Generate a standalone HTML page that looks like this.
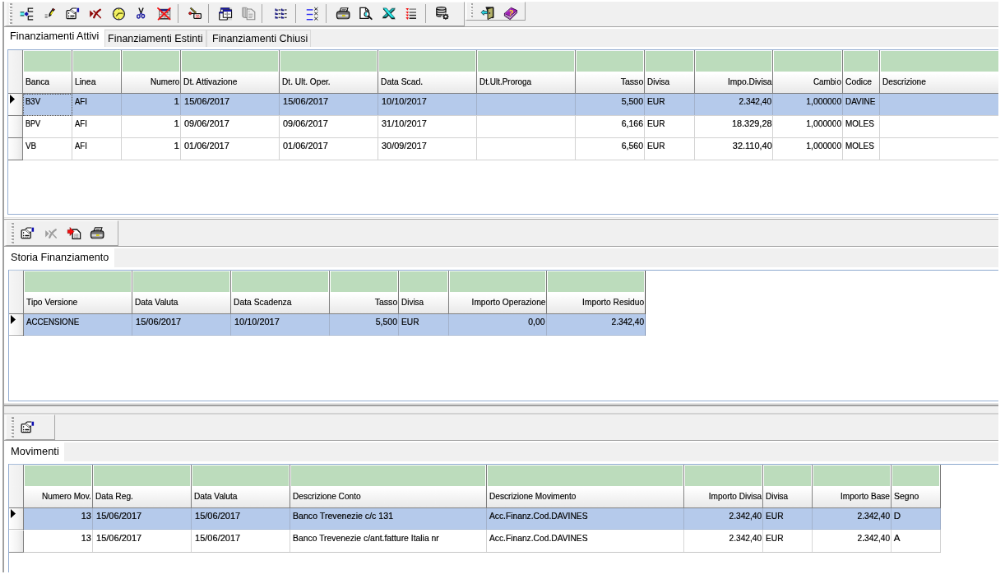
<!DOCTYPE html><html><head><meta charset="utf-8"><title>Finanziamenti</title><style>
html,body{margin:0;padding:0;background:#fff;overflow:hidden;}
html{width:1000px;height:575px;}
body{width:1000px;height:575px;overflow:hidden;position:relative;}
#root{position:absolute;left:0;top:0;width:1215px;height:699px;overflow:hidden;transform:scale(0.8224);transform-origin:0 0;
 font-family:"Liberation Sans",sans-serif;font-size:11.6px;color:#000;-webkit-text-stroke:0.2px #000;will-change:transform;}
#root div{position:absolute;box-sizing:border-box;}
.bg{background:#f0f0f0;}
.ln{background:#a0a0a0;}
.tab{font-size:13.33px;white-space:nowrap;line-height:16px;-webkit-text-stroke:0;}
.tabi{background:#f0f0f0;border:1px solid #dadada;border-bottom:none;}
.grid{background:#fff;border:1px solid #90abd0;border-right:none;overflow:hidden;}
.hd{background:linear-gradient(#ffffff 0%,#ffffff 55%,#e9e9e9 100%);}
.gr{background:#bcdcbc;}
.vs{background:#7f7f7f;width:1px;}
.hs{background:#7f7f7f;height:1px;}
.c{white-space:nowrap;overflow:hidden;line-height:13px;padding:2px 1px 0 3.6px;}
.h{white-space:nowrap;overflow:hidden;line-height:13px;padding:4.8px 1px 0 3.2px;}
.r{text-align:right;}
.sel{background:#b5caeb;}
.gl{background:#d4d4d4;}
.gls{background:#a3b2cc;}
.rh{background:linear-gradient(90deg,#ffffff 0%,#f4f4f4 60%,#e6e6e6 100%);border-right:1px solid #7f7f7f;border-bottom:1px solid #7f7f7f;}
.tb{background:#f0f0f0;border-right:1px solid #a8a8a8;border-bottom:1px solid #a0a0a0;border-left:3.4px solid #fafafa;border-top:1px solid #fbfbfb;}
.grip{width:2px;background:repeating-linear-gradient(#a6a6a6 0,#a6a6a6 1.7px,transparent 1.7px,transparent 3.83px);}
.gripw{width:2.2px;background:repeating-linear-gradient(#ffffff 0,#ffffff 1.7px,transparent 1.7px,transparent 3.83px);}
.sep{width:1px;background:#a6a6a6;}
.ic{width:16px;height:16px;}
.ic svg{position:absolute;left:0;top:0;width:16px;height:16px;overflow:visible;}
</style></head><body><div id="root">
<div class="" style="left:2.8px;top:2px;width:1.8px;height:694px;background:#a0a0a0"></div>
<div class="bg" style="left:5px;top:2px;width:1208.6px;height:30px;"></div>
<div class="ln" style="left:5px;top:31.5px;width:1208.6px;height:1px;"></div>
<div class="tb" style="left:5px;top:2px;width:559.6px;height:29.5px;"></div>
<div class="gripw" style="left:11.4px;top:5px;width:2.2px;height:24.8px;"></div>
<div class="grip" style="left:12.4px;top:4px;width:2.2px;height:24.8px;"></div>
<div class="ic" style="left:24px;top:9px"><svg viewBox="0 0 16 16"><rect x="0.6" y="5.6" width="4.8" height="4.6" fill="#5cf2f2"/><path d="M0.6 5.8H5.4M0.6 10H5.4" stroke="#102828" stroke-width="1.1"/><path d="M5.4 8L8.3 5.2L10.8 8L8.3 10.8Z" fill="#1414a8"/><path d="M16.2 1H10.3V5.2H16.2M16.2 10.7H10.3V14.9H16.2" fill="none" stroke="#151515" stroke-width="1.25"/></svg></div>
<div class="ic" style="left:52px;top:9px"><svg viewBox="0 0 16 16"><path d="M7.2 11.8L7.5 8L12.1 0.7L14.9 2.4L10.3 9.7Z" fill="#181818"/><path d="M9 8.2L11.6 4L13 4.9L10.4 9Z" fill="#f2ec10"/><path d="M11.9 2.2L13.9 3.5L14.5 2.5L12.5 1.3Z" fill="#8a1414"/><path d="M14 4.2L11 9.4" stroke="#fff" stroke-width="0.9"/><path d="M2.6 8.8H5.8M2.6 10.6H5.8M2.6 12.4H5.8" stroke="#8c8c8c" stroke-width="1.1"/></svg></div>
<div class="ic" style="left:80px;top:9px"><svg viewBox="0 0 16 16"><rect x="1.1" y="3.7" width="11" height="10" rx="1" fill="#fff" stroke="#141414" stroke-width="1.3"/><path d="M3 7H4.2M3 10.6H4.2M5.4 10.6H10.4" stroke="#000" stroke-width="1.5"/><path d="M3 12.5H10.4" stroke="#8a8a8a" stroke-width="0.9" stroke-dasharray="1 0.7"/><path d="M4.6 3.4L8 0.9L13.4 1.2V5L11.2 7.4L9.6 8L5.2 3.9Z" fill="#fff"/><path d="M5.2 3.6L10 7.6M6.6 2.6L11.4 6.6" stroke="#555" stroke-width="0.9"/><path d="M5 3.4L8 1H13.2" fill="none" stroke="#141414" stroke-width="1.1"/><path d="M12.6 5.6L10.4 7.6" stroke="#141414" stroke-width="1.1"/><rect x="13.5" y="0.7" width="2.6" height="5" fill="#1010b0"/></svg></div>
<div class="ic" style="left:108px;top:9px"><svg viewBox="0 0 16 16"><g transform="translate(0 0)"><path d="M1.2 3.4L5.6 7.6L1.2 11.9Z" fill="#8e0808"/><path d="M6 4.2L14.2 12.6" fill="none" stroke="#8e0808" stroke-width="1.5" stroke-linecap="round"/><path d="M13.8 2.8C10.6 4.6 8 8 6.2 12.2" fill="none" stroke="#8e0808" stroke-width="2.3" stroke-linecap="round"/></g></svg></div>
<div class="ic" style="left:136px;top:9px"><svg viewBox="0 0 16 16"><circle cx="8.4" cy="7.9" r="7" fill="#f4f262" stroke="#2a2a40" stroke-width="1.3"/><path d="M8.4 1.6V3M8.4 12.8V14.2M2.2 7.9H3.4M13.4 7.9H14.6" stroke="#55551a" stroke-width="0.9"/><path d="M5.2 10.6L8.2 7.2H13" fill="none" stroke="#4a4a08" stroke-width="1.3"/></svg></div>
<div class="ic" style="left:164px;top:9px"><svg viewBox="0 0 16 16"><path d="M4.9 0.6L7.7 7.4M10.1 0.6L7.3 7.4" stroke="#101010" stroke-width="1.4" fill="none"/><path d="M7.5 7L5.6 9M7.5 7L9 8.8" stroke="#1c1ca0" stroke-width="1.2"/><ellipse cx="4.4" cy="11" rx="1.7" ry="2.1" fill="none" stroke="#1c1ca0" stroke-width="1.4"/><ellipse cx="9.9" cy="10.6" rx="1.7" ry="2.1" fill="none" stroke="#1c1ca0" stroke-width="1.4"/></svg></div>
<div class="ic" style="left:192px;top:9px"><svg viewBox="0 0 16 16"><rect x="1.6" y="2.2" width="13.2" height="11.6" fill="#e4e4e4" stroke="#707070" stroke-width="1"/><rect x="2" y="2.2" width="12.6" height="2.2" fill="#10107a"/><path d="M2 8.6H14.6M2 11.4H14.6M8.3 4.4V13.8" stroke="#909090" stroke-width="0.9"/><rect x="4" y="5.6" width="2.4" height="1.8" fill="#555"/><rect x="10.4" y="5.6" width="2.4" height="1.8" fill="#555"/><path d="M2 13.8H14.8" stroke="#202020" stroke-width="1.2"/><path d="M0 0.9L14.6 14.4M14.8 1L0.6 14.6" stroke="#f21414" stroke-width="1.9" stroke-linecap="round"/></svg></div>
<div class="ic" style="left:228.5px;top:9px"><svg viewBox="0 0 16 16"><path d="M3.2 0.2L10.2 6.4L9 7.6L2.4 1.4Z" fill="#a8a018" stroke="#202020" stroke-width="0.9"/><path d="M8.4 8L12.2 6.8L10.4 5.2Z" fill="#fff"/><path d="M3 7.4H8" stroke="#000" stroke-width="1.2"/><circle cx="2.2" cy="7.2" r="1.6" fill="#e81414" stroke="#300" stroke-width="0.6"/><rect x="6.8" y="7.6" width="8.6" height="5.8" rx="0.8" fill="#fff" stroke="#101010" stroke-width="1.3"/><path d="M8.6 10.6L10 9.2L11 10.8L12.2 9.2L13.6 11M9 12H13.4" fill="none" stroke="#e02828" stroke-width="0.9"/></svg></div>
<div class="ic" style="left:266px;top:9px"><svg viewBox="0 0 16 16"><rect x="1.2" y="0.4" width="14.8" height="15.2" fill="#c4c4c4" opacity="0.55"/><rect x="2.5" y="0.7" width="10.4" height="6" fill="#fff" stroke="#101010" stroke-width="0.8"/><rect x="2.5" y="0.7" width="10.4" height="2" fill="#1818a8"/><rect x="5.3" y="3" width="10.2" height="9.2" fill="#fff" stroke="#101010" stroke-width="1.1"/><rect x="5.3" y="2.8" width="10.2" height="2.2" fill="#1818a8"/><path d="M7 8H9.4M11.2 8H13.6M10.3 5.4V11.6" stroke="#808080" stroke-width="1.3"/><rect x="0.6" y="5.8" width="9.8" height="9.2" rx="0.8" fill="#fff" stroke="#101010" stroke-width="1.2"/><rect x="0.6" y="5.4" width="5.2" height="2" fill="#1818a8"/><rect x="5.3" y="5.2" width="10.2" height="7" fill="#fff"/><path d="M5.3 5V12.2H15.5V5" fill="none" stroke="#101010" stroke-width="1.1"/><path d="M7 8.2H9.4M11.2 8.2H13.6M10.3 5.6V11.6" stroke="#808080" stroke-width="1.3"/><path d="M2.4 8.6V13" stroke="#9a9a9a" stroke-width="1" stroke-dasharray="1.4 1"/></svg></div>
<div class="ic" style="left:294px;top:9px"><svg viewBox="0 0 16 16"><path d="M0.8 0.3H5.4L6.8 1.2V12.6L2.2 12.2L0.8 11.2Z" fill="#dcdcdc" stroke="#8c8c8c" stroke-width="1"/><path d="M2.6 0.6V12M4.4 0.8V12.2" stroke="#9a9a9a" stroke-width="0.8"/><path d="M6.2 2H11.6L15.8 5.6V14.8H6.2Z" fill="#ececec" stroke="#8a8a8a" stroke-width="1.1"/><path d="M8.2 5H9.6M8.2 8.2H13.4M8.2 10.4H13.4M8.2 12.4H12.4" stroke="#a0a0a0" stroke-width="1"/></svg></div>
<div class="ic" style="left:334px;top:9px"><svg viewBox="0 0 16 16"><path d="M0.5 4.3V1.5H1.9V2.5H3.8V4.3Z" fill="#10107c"/><path d="M4.6 3H7.2" stroke="#3a3a3a" stroke-width="1.3"/><path d="M7.9 4.3V1.5H9.3V2.5H11.2V4.3Z" fill="#10107c"/><path d="M12 3H14.6" stroke="#3a3a3a" stroke-width="1.3"/><path d="M0.5 8.95V6.15H1.9V7.15H3.8V8.95Z" fill="#10107c"/><path d="M4.6 7.65H7.2" stroke="#3a3a3a" stroke-width="1.3"/><path d="M7.9 8.95V6.15H9.3V7.15H11.2V8.95Z" fill="#10107c"/><path d="M12 7.65H14.6" stroke="#3a3a3a" stroke-width="1.3"/><path d="M0.5 13.6V10.8H1.9V11.8H3.8V13.6Z" fill="#10107c"/><path d="M4.6 12.3H7.2" stroke="#3a3a3a" stroke-width="1.3"/><path d="M7.9 13.6V10.8H9.3V11.8H11.2V13.6Z" fill="#10107c"/><path d="M12 12.3H14.6" stroke="#3a3a3a" stroke-width="1.3"/></svg></div>
<div class="ic" style="left:371px;top:9px"><svg viewBox="0 0 16 16"><path d="M1.8 2.9H9.4" stroke="#2a2af4" stroke-width="1.4"/><path d="M11.2 0L15.4 3.6M15.4 0L11.2 3.6" stroke="#262626" stroke-width="1"/><path d="M1.8 8.5H9.4" stroke="#2a2af4" stroke-width="1.4"/><path d="M11.2 5.6L15.4 9.2M15.4 5.6L11.2 9.2" stroke="#262626" stroke-width="1"/><path d="M1.8 14.7H9.4" stroke="#2a2af4" stroke-width="1.4"/><path d="M11.2 11.8L15.4 15.4M15.4 11.8L11.2 15.4" stroke="#262626" stroke-width="1"/></svg></div>
<div class="ic" style="left:409px;top:9px"><svg viewBox="0 0 16 16"><path d="M4 5L5.6 0.8H14L12.2 5Z" fill="#fff" stroke="#101010" stroke-width="1.1"/><path d="M6.6 2.4H11.8M6.2 3.8H11" stroke="#505050" stroke-width="0.9"/><path d="M0.4 8.4C0.4 6.2 1.8 4.8 3.8 4.8H13C15 4.8 16 6 16 7.6V10.8C16 12.6 14.6 13.8 13 13.8H3.4C1.4 13.8 0.4 12.6 0.4 11Z" fill="#707070" stroke="#101010" stroke-width="1.1"/><path d="M4 5.4L5 3.2M12.4 5.4L13.4 3.2" stroke="#101010" stroke-width="1"/><rect x="1.6" y="8.6" width="13" height="3" fill="#d4d4d4"/><rect x="7" y="9" width="3.6" height="2" fill="#d8cc10"/><path d="M2 12.8H14.4" stroke="#8a8a8a" stroke-width="0.9"/></svg></div>
<div class="ic" style="left:437px;top:9px"><svg viewBox="0 0 16 16"><path d="M0.9 0.3H7.6L11 3.6V13.4H0.9Z" fill="#fff" stroke="#101010" stroke-width="1.3"/><path d="M7.4 0.5V3.8H10.8" fill="none" stroke="#101010" stroke-width="1"/><circle cx="9" cy="8.2" r="3" fill="#fff" stroke="#101010" stroke-width="1.2"/><path d="M9 5.6A2.7 2.7 0 0 0 9 10.9Z" fill="#38e4f0"/><path d="M11.2 10.6L14.8 14.2" stroke="#101010" stroke-width="1.9" stroke-linecap="round"/></svg></div>
<div class="ic" style="left:465px;top:9px"><svg viewBox="0 0 16 16"><path d="M-0.4 13.2H4.2L15.6 2.4H11.6Z" fill="#101010"/><path d="M11.6 1.2H15.4L4.4 11.8H0.4Z" fill="#22b4b4" stroke="#0a3c3c" stroke-width="0.7"/><path d="M0.8 2H4.8L15.8 14.2H11.2Z" fill="#101010"/><path d="M0.8 0.9H4.8L15 12.8H11Z" fill="#28ecec" stroke="#0a4a4a" stroke-width="0.7"/></svg></div>
<div class="ic" style="left:493px;top:9px"><svg viewBox="0 0 16 16"><path d="M4.6 2.1H13" stroke="#8a8a8a" stroke-width="1.5"/><path d="M0.4 1H4L2.4 3.8Z" fill="#f41818"/><path d="M4.6 6H13" stroke="#5a5a5a" stroke-width="1.5"/><path d="M0.4 4.9H4L2.4 7.7Z" fill="#f41818"/><path d="M4.6 9.6H13" stroke="#303030" stroke-width="1.5"/><path d="M0.4 8.5H4L2.4 11.3Z" fill="#f41818"/><path d="M4.6 13.2H13" stroke="#1a1a1a" stroke-width="1.5"/><path d="M0.4 12.1H4L2.4 14.9Z" fill="#f41818"/></svg></div>
<div class="ic" style="left:529.5px;top:9px"><svg viewBox="0 0 16 16"><path d="M0.8 1.4V9.4C0.8 10.6 3.2 11.2 6.4 11.2C9.6 11.2 12 10.6 12 9.4V1.4Z" fill="#e6e6e6"/><ellipse cx="6.4" cy="1.4" rx="5.6" ry="1.7" fill="#cfcfcf" stroke="#141414" stroke-width="1.2"/><path d="M0.8 1.4V9.2C0.8 10.6 3.4 11.2 6.4 11.2M12 1.4V6.6M0.8 4.2C0.8 5.6 3.4 6.2 6.4 6.2C9.6 6.2 12 5.6 12 4.2M0.8 7C0.8 8.4 3.4 9 6.4 9C7.2 9 8 8.95 8.6 8.9" fill="none" stroke="#141414" stroke-width="1.3"/><circle cx="11.9" cy="11.2" r="2.3" fill="#fff" stroke="#1c1c1c" stroke-width="1.4"/><path d="M11.9 7.4V15M8.1 11.2H15.7M9.2 8.5L14.6 13.9M14.6 8.5L9.2 13.9" stroke="#1c1c1c" stroke-width="1.1"/><circle cx="11.9" cy="11.2" r="1.3" fill="#fff"/></svg></div>
<div class="sep" style="left:215.5px;top:5px;width:1px;height:23px;"></div>
<div class="sep" style="left:253px;top:5px;width:1px;height:23px;"></div>
<div class="sep" style="left:318px;top:5px;width:1px;height:23px;"></div>
<div class="sep" style="left:358.8px;top:5px;width:1px;height:23px;"></div>
<div class="sep" style="left:395.9px;top:5px;width:1px;height:23px;"></div>
<div class="sep" style="left:516.9px;top:5px;width:1px;height:23px;"></div>
<div class="tb" style="left:564.8px;top:2px;width:74.7px;height:23.4px;"></div>
<div class="gripw" style="left:571.8px;top:5.4px;width:2.2px;height:17.2px;"></div>
<div class="grip" style="left:572.8px;top:4.4px;width:2.2px;height:17.2px;"></div>
<div class="ic" style="left:585px;top:8px"><svg viewBox="0 0 16 16"><path d="M5.6 0.9H15V13.6H10.4" fill="#181818" stroke="#101010" stroke-width="1"/><path d="M8 2.6L14.4 1.2V12.6L8 15.6Z" fill="#a6a45c" stroke="#101010" stroke-width="0.9"/><path d="M9 3.6L13.4 2.6V12L9 14Z" fill="#b4b26a"/><rect x="9.6" y="7" width="1.5" height="1.9" fill="#2a2a50"/><path d="M0 7.2L3.2 4V5.8H7.6V8.6H3.2V10.4Z" fill="#28dce8" stroke="#103038" stroke-width="0.8"/></svg></div>
<div class="ic" style="left:613px;top:8px"><svg viewBox="0 0 16 16"><path d="M0.4 8.4V11.4L7.4 15.8L15.6 7.6V4.6Z" fill="#fff" stroke="#2c0838" stroke-width="0.9"/><path d="M0.8 10.4L7.4 14.6L15.2 6.6" fill="none" stroke="#7a1c90" stroke-width="1.1"/><path d="M0.3 8.4L8.4 1.3L15.7 4.6L7.2 12.2Z" fill="#a020b8" stroke="#3a0848" stroke-width="0.9"/><path d="M1.4 8.2L8.4 2.2" stroke="#e8a0f4" stroke-width="1" stroke-dasharray="1 0.8"/><text x="5.6" y="10.6" font-family="Liberation Sans, sans-serif" font-weight="bold" font-size="9.6" fill="#fae61e" transform="rotate(14 8 7)">?</text></svg></div>
<div class="" style="left:5px;top:32.5px;width:1208.6px;height:2px;background:#fff"></div>
<div class="bg" style="left:5px;top:34.5px;width:1208.6px;height:22.5px;"></div>
<div class="tab" style="left:5px;top:32.5px;width:121.5px;height:26px;background:#fff;padding:3.6px 0 0 7px"><span style="display:inline-block;transform:scaleX(0.9433);transform-origin:0 0">Finanziamenti Attivi</span></div>
<div class="tab tabi" style="left:126.5px;top:35.5px;width:124.5px;height:21.5px;padding:2.2px 0 0 3.6px"><span style="display:inline-block;transform:scaleX(0.9388);transform-origin:0 0">Finanziamenti Estinti</span></div>
<div class="tab tabi" style="left:251px;top:35.5px;width:126.5px;height:21.5px;padding:2.2px 0 0 6.2px"><span style="display:inline-block;transform:scaleX(0.9391);transform-origin:0 0">Finanziamenti Chiusi</span></div>
<div class="grid" style="left:9px;top:60px;width:1204.6px;height:201px">
<div class="hd" style="left:0px;top:0px;width:1204.6px;height:52px;"></div>
<div class="" style="left:0px;top:0px;width:17px;height:52px;background:linear-gradient(90deg,#f6f6f6,#eeeeee)"></div>
<div class="vs" style="left:17px;top:0px;width:1px;height:53px;"></div>
<div class="gr" style="left:19px;top:1px;width:57px;height:25px;"></div>
<div class="h" style="left:18px;top:26px;width:59px;height:26px;"><span style="display:inline-block;transform:scaleX(0.8840);transform-origin:0 0">Banca</span></div>
<div class="vs" style="left:77px;top:0px;width:1px;height:53px;"></div>
<div class="gr" style="left:79px;top:1px;width:57px;height:25px;"></div>
<div class="h" style="left:78px;top:26px;width:59px;height:26px;"><span style="display:inline-block;transform:scaleX(0.8956);transform-origin:0 0">Linea</span></div>
<div class="vs" style="left:137px;top:0px;width:1px;height:53px;"></div>
<div class="gr" style="left:139px;top:1px;width:69px;height:25px;"></div>
<div class="h r" style="left:138px;top:26px;width:71px;height:26px;"><span style="display:inline-block;transform:scaleX(0.8526);transform-origin:100% 0">Numero</span></div>
<div class="vs" style="left:209px;top:0px;width:1px;height:53px;"></div>
<div class="gr" style="left:211px;top:1px;width:117px;height:25px;"></div>
<div class="h" style="left:210px;top:26px;width:119px;height:26px;"><span style="display:inline-block;transform:scaleX(0.8821);transform-origin:0 0">Dt. Attivazione</span></div>
<div class="vs" style="left:329px;top:0px;width:1px;height:53px;"></div>
<div class="gr" style="left:331px;top:1px;width:117px;height:25px;"></div>
<div class="h" style="left:330px;top:26px;width:119px;height:26px;"><span style="display:inline-block;transform:scaleX(0.8758);transform-origin:0 0">Dt. Ult. Oper.</span></div>
<div class="vs" style="left:449px;top:0px;width:1px;height:53px;"></div>
<div class="gr" style="left:451px;top:1px;width:117px;height:25px;"></div>
<div class="h" style="left:450px;top:26px;width:119px;height:26px;"><span style="display:inline-block;transform:scaleX(0.8896);transform-origin:0 0">Data Scad.</span></div>
<div class="vs" style="left:569px;top:0px;width:1px;height:53px;"></div>
<div class="gr" style="left:571px;top:1px;width:117px;height:25px;"></div>
<div class="h" style="left:570px;top:26px;width:119px;height:26px;"><span style="display:inline-block;transform:scaleX(0.8593);transform-origin:0 0">Dt.Ult.Proroga</span></div>
<div class="vs" style="left:689px;top:0px;width:1px;height:53px;"></div>
<div class="gr" style="left:691px;top:1px;width:81px;height:25px;"></div>
<div class="h r" style="left:690px;top:26px;width:83px;height:26px;"><span style="display:inline-block;transform:scaleX(0.9128);transform-origin:100% 0">Tasso</span></div>
<div class="vs" style="left:773px;top:0px;width:1px;height:53px;"></div>
<div class="gr" style="left:775px;top:1px;width:57.7px;height:25px;"></div>
<div class="h" style="left:774px;top:26px;width:59.7px;height:26px;"><span style="display:inline-block;transform:scaleX(0.8594);transform-origin:0 0">Divisa</span></div>
<div class="vs" style="left:833.7px;top:0px;width:1px;height:53px;"></div>
<div class="gr" style="left:835.7px;top:1px;width:92.7px;height:25px;"></div>
<div class="h r" style="left:834.7px;top:26px;width:94.7px;height:26px;"><span style="display:inline-block;transform:scaleX(0.8860);transform-origin:100% 0">Impo.Divisa</span></div>
<div class="vs" style="left:929.4px;top:0px;width:1px;height:53px;"></div>
<div class="gr" style="left:931.4px;top:1px;width:81.6px;height:25px;"></div>
<div class="h r" style="left:930.4px;top:26px;width:83.6px;height:26px;"><span style="display:inline-block;transform:scaleX(0.8496);transform-origin:100% 0">Cambio</span></div>
<div class="vs" style="left:1014px;top:0px;width:1px;height:53px;"></div>
<div class="gr" style="left:1016px;top:1px;width:42px;height:25px;"></div>
<div class="h" style="left:1015px;top:26px;width:44px;height:26px;"><span style="display:inline-block;transform:scaleX(0.8870);transform-origin:0 0">Codice</span></div>
<div class="vs" style="left:1059px;top:0px;width:1px;height:53px;"></div>
<div class="gr" style="left:1061px;top:1px;width:142.6px;height:25px;"></div>
<div class="h" style="left:1060px;top:26px;width:144.6px;height:26px;"><span style="display:inline-block;transform:scaleX(0.8717);transform-origin:0 0">Descrizione</span></div>
<div class="hs" style="left:0px;top:52px;width:1204.6px;height:1px;"></div>
<div class="sel" style="left:18px;top:53px;width:1186.6px;height:26px;"></div>
<div class="rh" style="left:0px;top:53px;width:18px;height:27px;"><svg width="8" height="12" style="position:absolute;left:2.3px;top:1px"><path d="M0 0L6 5.5L0 11Z" fill="#000"/></svg></div>
<div class="c" style="left:18px;top:53px;width:59px;height:26px;padding-left:2.8px"><span style="display:inline-block;transform:scaleX(0.8223);transform-origin:0 0">B3V</span></div>
<div class="gls" style="left:77px;top:53px;width:1px;height:26px;"></div>
<div class="c" style="left:78px;top:53px;width:59px;height:26px;padding-left:2.8px"><span style="display:inline-block;transform:scaleX(0.8191);transform-origin:0 0">AFI</span></div>
<div class="gls" style="left:137px;top:53px;width:1px;height:26px;"></div>
<div class="c r" style="left:138px;top:53px;width:71px;height:26px;">1</div>
<div class="gls" style="left:209px;top:53px;width:1px;height:26px;"></div>
<div class="c" style="left:210px;top:53px;width:119px;height:26px;"><span style="display:inline-block;transform:scaleX(0.9524);transform-origin:0 0">15/06/2017</span></div>
<div class="gls" style="left:329px;top:53px;width:1px;height:26px;"></div>
<div class="c" style="left:330px;top:53px;width:119px;height:26px;"><span style="display:inline-block;transform:scaleX(0.9524);transform-origin:0 0">15/06/2017</span></div>
<div class="gls" style="left:449px;top:53px;width:1px;height:26px;"></div>
<div class="c" style="left:450px;top:53px;width:119px;height:26px;"><span style="display:inline-block;transform:scaleX(0.9435);transform-origin:0 0">10/10/2017</span></div>
<div class="gls" style="left:569px;top:53px;width:1px;height:26px;"></div>
<div class="gls" style="left:689px;top:53px;width:1px;height:26px;"></div>
<div class="c r" style="left:690px;top:53px;width:83px;height:26px;"><span style="display:inline-block;transform:scaleX(0.9067);transform-origin:100% 0">5,500</span></div>
<div class="gls" style="left:773px;top:53px;width:1px;height:26px;"></div>
<div class="c" style="left:774px;top:53px;width:59.7px;height:26px;padding-left:2.8px"><span style="display:inline-block;transform:scaleX(0.8827);transform-origin:0 0">EUR</span></div>
<div class="gls" style="left:833.7px;top:53px;width:1px;height:26px;"></div>
<div class="c r" style="left:834.7px;top:53px;width:94.7px;height:26px;"><span style="display:inline-block;transform:scaleX(0.8763);transform-origin:100% 0">2.342,40</span></div>
<div class="gls" style="left:929.4px;top:53px;width:1px;height:26px;"></div>
<div class="c r" style="left:930.4px;top:53px;width:83.6px;height:26px;"><span style="display:inline-block;transform:scaleX(0.8909);transform-origin:100% 0">1,000000</span></div>
<div class="gls" style="left:1014px;top:53px;width:1px;height:26px;"></div>
<div class="c" style="left:1015px;top:53px;width:44px;height:26px;padding-left:2.8px"><span style="display:inline-block;transform:scaleX(0.8597);transform-origin:0 0">DAVINE</span></div>
<div class="gls" style="left:1059px;top:53px;width:1px;height:26px;"></div>
<div class="gl" style="left:18px;top:79px;width:1186.6px;height:1px;"></div>
<div class="rh" style="left:0px;top:80px;width:18px;height:27px;"></div>
<div class="c" style="left:18px;top:80px;width:59px;height:26px;padding-left:2.8px"><span style="display:inline-block;transform:scaleX(0.7773);transform-origin:0 0">BPV</span></div>
<div class="gl" style="left:77px;top:80px;width:1px;height:26px;"></div>
<div class="c" style="left:78px;top:80px;width:59px;height:26px;padding-left:2.8px"><span style="display:inline-block;transform:scaleX(0.8191);transform-origin:0 0">AFI</span></div>
<div class="gl" style="left:137px;top:80px;width:1px;height:26px;"></div>
<div class="c r" style="left:138px;top:80px;width:71px;height:26px;">1</div>
<div class="gl" style="left:209px;top:80px;width:1px;height:26px;"></div>
<div class="c" style="left:210px;top:80px;width:119px;height:26px;"><span style="display:inline-block;transform:scaleX(0.9435);transform-origin:0 0">09/06/2017</span></div>
<div class="gl" style="left:329px;top:80px;width:1px;height:26px;"></div>
<div class="c" style="left:330px;top:80px;width:119px;height:26px;"><span style="display:inline-block;transform:scaleX(0.9435);transform-origin:0 0">09/06/2017</span></div>
<div class="gl" style="left:449px;top:80px;width:1px;height:26px;"></div>
<div class="c" style="left:450px;top:80px;width:119px;height:26px;"><span style="display:inline-block;transform:scaleX(0.9435);transform-origin:0 0">31/10/2017</span></div>
<div class="gl" style="left:569px;top:80px;width:1px;height:26px;"></div>
<div class="gl" style="left:689px;top:80px;width:1px;height:26px;"></div>
<div class="c r" style="left:690px;top:80px;width:83px;height:26px;"><span style="display:inline-block;transform:scaleX(0.9067);transform-origin:100% 0">6,166</span></div>
<div class="gl" style="left:773px;top:80px;width:1px;height:26px;"></div>
<div class="c" style="left:774px;top:80px;width:59.7px;height:26px;padding-left:2.8px"><span style="display:inline-block;transform:scaleX(0.8827);transform-origin:0 0">EUR</span></div>
<div class="gl" style="left:833.7px;top:80px;width:1px;height:26px;"></div>
<div class="c r" style="left:834.7px;top:80px;width:94.7px;height:26px;"><span style="display:inline-block;transform:scaleX(0.9435);transform-origin:100% 0">18.329,28</span></div>
<div class="gl" style="left:929.4px;top:80px;width:1px;height:26px;"></div>
<div class="c r" style="left:930.4px;top:80px;width:83.6px;height:26px;"><span style="display:inline-block;transform:scaleX(0.8909);transform-origin:100% 0">1,000000</span></div>
<div class="gl" style="left:1014px;top:80px;width:1px;height:26px;"></div>
<div class="c" style="left:1015px;top:80px;width:44px;height:26px;padding-left:2.8px"><span style="display:inline-block;transform:scaleX(0.8571);transform-origin:0 0">MOLES</span></div>
<div class="gl" style="left:1059px;top:80px;width:1px;height:26px;"></div>
<div class="gl" style="left:18px;top:106px;width:1186.6px;height:1px;"></div>
<div class="rh" style="left:0px;top:107px;width:18px;height:27px;"></div>
<div class="c" style="left:18px;top:107px;width:59px;height:26px;padding-left:2.8px"><span style="display:inline-block;transform:scaleX(0.8502);transform-origin:0 0">VB</span></div>
<div class="gl" style="left:77px;top:107px;width:1px;height:26px;"></div>
<div class="c" style="left:78px;top:107px;width:59px;height:26px;padding-left:2.8px"><span style="display:inline-block;transform:scaleX(0.8191);transform-origin:0 0">AFI</span></div>
<div class="gl" style="left:137px;top:107px;width:1px;height:26px;"></div>
<div class="c r" style="left:138px;top:107px;width:71px;height:26px;">1</div>
<div class="gl" style="left:209px;top:107px;width:1px;height:26px;"></div>
<div class="c" style="left:210px;top:107px;width:119px;height:26px;"><span style="display:inline-block;transform:scaleX(0.9435);transform-origin:0 0">01/06/2017</span></div>
<div class="gl" style="left:329px;top:107px;width:1px;height:26px;"></div>
<div class="c" style="left:330px;top:107px;width:119px;height:26px;"><span style="display:inline-block;transform:scaleX(0.9435);transform-origin:0 0">01/06/2017</span></div>
<div class="gl" style="left:449px;top:107px;width:1px;height:26px;"></div>
<div class="c" style="left:450px;top:107px;width:119px;height:26px;"><span style="display:inline-block;transform:scaleX(0.9435);transform-origin:0 0">30/09/2017</span></div>
<div class="gl" style="left:569px;top:107px;width:1px;height:26px;"></div>
<div class="gl" style="left:689px;top:107px;width:1px;height:26px;"></div>
<div class="c r" style="left:690px;top:107px;width:83px;height:26px;"><span style="display:inline-block;transform:scaleX(0.9067);transform-origin:100% 0">6,560</span></div>
<div class="gl" style="left:773px;top:107px;width:1px;height:26px;"></div>
<div class="c" style="left:774px;top:107px;width:59.7px;height:26px;padding-left:2.8px"><span style="display:inline-block;transform:scaleX(0.8827);transform-origin:0 0">EUR</span></div>
<div class="gl" style="left:833.7px;top:107px;width:1px;height:26px;"></div>
<div class="c r" style="left:834.7px;top:107px;width:94.7px;height:26px;"><span style="display:inline-block;transform:scaleX(0.9435);transform-origin:100% 0">32.110,40</span></div>
<div class="gl" style="left:929.4px;top:107px;width:1px;height:26px;"></div>
<div class="c r" style="left:930.4px;top:107px;width:83.6px;height:26px;"><span style="display:inline-block;transform:scaleX(0.8909);transform-origin:100% 0">1,000000</span></div>
<div class="gl" style="left:1014px;top:107px;width:1px;height:26px;"></div>
<div class="c" style="left:1015px;top:107px;width:44px;height:26px;padding-left:2.8px"><span style="display:inline-block;transform:scaleX(0.8571);transform-origin:0 0">MOLES</span></div>
<div class="gl" style="left:1059px;top:107px;width:1px;height:26px;"></div>
<div class="gl" style="left:18px;top:133px;width:1186.6px;height:1px;"></div>
</div>
<div class="" style="left:28px;top:114px;width:60px;height:27px;border:1px dotted #555;background:transparent"></div>
<div class="" style="left:5px;top:263.7px;width:1208.6px;height:1.2px;background:#e6e6e6"></div>
<div class="ln" style="left:5px;top:266.2px;width:1208.6px;height:1.2px;"></div>
<div class="bg" style="left:5px;top:267.4px;width:1208.6px;height:32px;"></div>
<div class="ln" style="left:5px;top:299.1px;width:1208.6px;height:1px;"></div>
<div class="tb" style="left:5px;top:267.5px;width:139px;height:31.6px;"></div>
<div class="gripw" style="left:13.4px;top:272px;width:2.2px;height:24.8px;"></div>
<div class="grip" style="left:14.4px;top:271px;width:2.2px;height:24.8px;"></div>
<div class="ic" style="left:25px;top:276.3px"><svg viewBox="0 0 16 16"><rect x="1.1" y="3.7" width="11" height="10" rx="1" fill="#fff" stroke="#141414" stroke-width="1.3"/><path d="M3 7H4.2M3 10.6H4.2M5.4 10.6H10.4" stroke="#000" stroke-width="1.5"/><path d="M3 12.5H10.4" stroke="#8a8a8a" stroke-width="0.9" stroke-dasharray="1 0.7"/><path d="M4.6 3.4L8 0.9L13.4 1.2V5L11.2 7.4L9.6 8L5.2 3.9Z" fill="#fff"/><path d="M5.2 3.6L10 7.6M6.6 2.6L11.4 6.6" stroke="#555" stroke-width="0.9"/><path d="M5 3.4L8 1H13.2" fill="none" stroke="#141414" stroke-width="1.1"/><path d="M12.6 5.6L10.4 7.6" stroke="#141414" stroke-width="1.1"/><rect x="13.5" y="0.7" width="2.6" height="5" fill="#1010b0"/></svg></div>
<div class="ic" style="left:53.5px;top:276.3px"><svg viewBox="0 0 16 16"><g transform="translate(0 0.5)"><path d="M1.2 3.4L5.6 7.6L1.2 11.9Z" fill="#9e9e9e"/><path d="M6 4.2L14.2 12.6" fill="none" stroke="#9e9e9e" stroke-width="1.5" stroke-linecap="round"/><path d="M13.8 2.8C10.6 4.6 8 8 6.2 12.2" fill="none" stroke="#9e9e9e" stroke-width="2.3" stroke-linecap="round"/></g></svg></div>
<div class="ic" style="left:81.5px;top:276.3px"><svg viewBox="0 0 16 16"><path d="M6.2 3H11.6L15.6 7V14.4H6.2Z" fill="#fff" stroke="#101010" stroke-width="1.3"/><path d="M8 9H13.8M8 11H13.8M8 12.8H13.8M10 8V13.4M12 8V13.4" stroke="#808080" stroke-width="0.9" stroke-dasharray="1.3 0.8"/><path d="M0.2 3.4H3V0.5L8 5.5L3 10.5V7.6H0.2Z" fill="#f60c0c" stroke="#700404" stroke-width="0.5"/></svg></div>
<div class="ic" style="left:109.5px;top:276.3px"><svg viewBox="0 0 16 16"><path d="M4 5L5.6 0.8H14L12.2 5Z" fill="#fff" stroke="#101010" stroke-width="1.1"/><path d="M6.6 2.4H11.8M6.2 3.8H11" stroke="#505050" stroke-width="0.9"/><path d="M0.4 8.4C0.4 6.2 1.8 4.8 3.8 4.8H13C15 4.8 16 6 16 7.6V10.8C16 12.6 14.6 13.8 13 13.8H3.4C1.4 13.8 0.4 12.6 0.4 11Z" fill="#707070" stroke="#101010" stroke-width="1.1"/><path d="M4 5.4L5 3.2M12.4 5.4L13.4 3.2" stroke="#101010" stroke-width="1"/><rect x="1.6" y="8.6" width="13" height="3" fill="#d4d4d4"/><rect x="7" y="9" width="3.6" height="2" fill="#d8cc10"/><path d="M2 12.8H14.4" stroke="#8a8a8a" stroke-width="0.9"/></svg></div>
<div class="" style="left:5px;top:300.1px;width:1208.6px;height:2px;background:#fff"></div>
<div class="bg" style="left:5px;top:302.1px;width:1208.6px;height:22.5px;"></div>
<div class="tab" style="left:5px;top:300.1px;width:134px;height:26px;background:#fff;padding:4.5px 0 0 7.5px"><span style="display:inline-block;transform:scaleX(0.9474);transform-origin:0 0">Storia Finanziamento</span></div>
<div class="grid" style="left:10px;top:328px;width:1203.6px;height:159.5px">
<div class="hd" style="left:0px;top:0px;width:774px;height:52px;"></div>
<div class="" style="left:0px;top:0px;width:17px;height:52px;background:linear-gradient(90deg,#f6f6f6,#eeeeee)"></div>
<div class="vs" style="left:17px;top:0px;width:1px;height:53px;"></div>
<div class="gr" style="left:19px;top:1px;width:129px;height:25px;"></div>
<div class="h" style="left:18px;top:26px;width:131px;height:26px;"><span style="display:inline-block;transform:scaleX(0.8840);transform-origin:0 0">Tipo Versione</span></div>
<div class="vs" style="left:149px;top:0px;width:1px;height:53px;"></div>
<div class="gr" style="left:151px;top:1px;width:117px;height:25px;"></div>
<div class="h" style="left:150px;top:26px;width:119px;height:26px;"><span style="display:inline-block;transform:scaleX(0.8796);transform-origin:0 0">Data Valuta</span></div>
<div class="vs" style="left:269px;top:0px;width:1px;height:53px;"></div>
<div class="gr" style="left:271px;top:1px;width:117px;height:25px;"></div>
<div class="h" style="left:270px;top:26px;width:119px;height:26px;"><span style="display:inline-block;transform:scaleX(0.8895);transform-origin:0 0">Data Scadenza</span></div>
<div class="vs" style="left:389px;top:0px;width:1px;height:53px;"></div>
<div class="gr" style="left:391px;top:1px;width:81px;height:25px;"></div>
<div class="h r" style="left:390px;top:26px;width:83px;height:26px;"><span style="display:inline-block;transform:scaleX(0.9128);transform-origin:100% 0">Tasso</span></div>
<div class="vs" style="left:473px;top:0px;width:1px;height:53px;"></div>
<div class="gr" style="left:475px;top:1px;width:58px;height:25px;"></div>
<div class="h" style="left:474px;top:26px;width:60px;height:26px;"><span style="display:inline-block;transform:scaleX(0.8594);transform-origin:0 0">Divisa</span></div>
<div class="vs" style="left:534px;top:0px;width:1px;height:53px;"></div>
<div class="gr" style="left:536px;top:1px;width:116px;height:25px;"></div>
<div class="h r" style="left:535px;top:26px;width:118px;height:26px;"><span style="display:inline-block;transform:scaleX(0.8775);transform-origin:100% 0">Importo Operazione</span></div>
<div class="vs" style="left:653px;top:0px;width:1px;height:53px;"></div>
<div class="gr" style="left:655px;top:1px;width:117px;height:25px;"></div>
<div class="h r" style="left:654px;top:26px;width:119px;height:26px;"><span style="display:inline-block;transform:scaleX(0.8813);transform-origin:100% 0">Importo Residuo</span></div>
<div class="vs" style="left:773px;top:0px;width:1px;height:53px;"></div>
<div class="hs" style="left:0px;top:52px;width:774px;height:1px;"></div>
<div class="sel" style="left:18px;top:53px;width:756px;height:26px;"></div>
<div class="rh" style="left:0px;top:53px;width:18px;height:27px;"><svg width="8" height="12" style="position:absolute;left:2.3px;top:1px"><path d="M0 0L6 5.5L0 11Z" fill="#000"/></svg></div>
<div class="c" style="left:18px;top:53px;width:131px;height:26px;padding-left:2.8px"><span style="display:inline-block;transform:scaleX(0.8362);transform-origin:0 0">ACCENSIONE</span></div>
<div class="gls" style="left:149px;top:53px;width:1px;height:26px;"></div>
<div class="c" style="left:150px;top:53px;width:119px;height:26px;"><span style="display:inline-block;transform:scaleX(0.9524);transform-origin:0 0">15/06/2017</span></div>
<div class="gls" style="left:269px;top:53px;width:1px;height:26px;"></div>
<div class="c" style="left:270px;top:53px;width:119px;height:26px;"><span style="display:inline-block;transform:scaleX(0.9435);transform-origin:0 0">10/10/2017</span></div>
<div class="gls" style="left:389px;top:53px;width:1px;height:26px;"></div>
<div class="c r" style="left:390px;top:53px;width:83px;height:26px;"><span style="display:inline-block;transform:scaleX(0.9067);transform-origin:100% 0">5,500</span></div>
<div class="gls" style="left:473px;top:53px;width:1px;height:26px;"></div>
<div class="c" style="left:474px;top:53px;width:60px;height:26px;padding-left:2.8px"><span style="display:inline-block;transform:scaleX(0.8827);transform-origin:0 0">EUR</span></div>
<div class="gls" style="left:534px;top:53px;width:1px;height:26px;"></div>
<div class="c r" style="left:535px;top:53px;width:118px;height:26px;"><span style="display:inline-block;transform:scaleX(0.8961);transform-origin:100% 0">0,00</span></div>
<div class="gls" style="left:653px;top:53px;width:1px;height:26px;"></div>
<div class="c r" style="left:654px;top:53px;width:119px;height:26px;"><span style="display:inline-block;transform:scaleX(0.8763);transform-origin:100% 0">2.342,40</span></div>
<div class="gls" style="left:773px;top:53px;width:1px;height:26px;"></div>
<div class="gl" style="left:18px;top:79px;width:756px;height:1px;"></div>
</div>
<div class="" style="left:5px;top:490.3px;width:1208.6px;height:2.1px;background:#e4e4e4"></div>
<div class="ln" style="left:5px;top:492.4px;width:1208.6px;height:1.3px;"></div>
<div class="bg" style="left:5px;top:493.7px;width:1208.6px;height:42px;"></div>
<div class="" style="left:5px;top:501.8px;width:1208.6px;height:2.5px;background:#d2d2d2"></div>
<div class="ln" style="left:5px;top:535.3px;width:1208.6px;height:1px;"></div>
<div class="tb" style="left:5px;top:504.3px;width:62px;height:31px;"></div>
<div class="gripw" style="left:13.4px;top:508.4px;width:2.2px;height:24.8px;"></div>
<div class="grip" style="left:14.4px;top:507.4px;width:2.2px;height:24.8px;"></div>
<div class="ic" style="left:25px;top:512.4px"><svg viewBox="0 0 16 16"><rect x="1.1" y="3.7" width="11" height="10" rx="1" fill="#fff" stroke="#141414" stroke-width="1.3"/><path d="M3 7H4.2M3 10.6H4.2M5.4 10.6H10.4" stroke="#000" stroke-width="1.5"/><path d="M3 12.5H10.4" stroke="#8a8a8a" stroke-width="0.9" stroke-dasharray="1 0.7"/><path d="M4.6 3.4L8 0.9L13.4 1.2V5L11.2 7.4L9.6 8L5.2 3.9Z" fill="#fff"/><path d="M5.2 3.6L10 7.6M6.6 2.6L11.4 6.6" stroke="#555" stroke-width="0.9"/><path d="M5 3.4L8 1H13.2" fill="none" stroke="#141414" stroke-width="1.1"/><path d="M12.6 5.6L10.4 7.6" stroke="#141414" stroke-width="1.1"/><rect x="13.5" y="0.7" width="2.6" height="5" fill="#1010b0"/></svg></div>
<div class="" style="left:5px;top:536.3px;width:1208.6px;height:2px;background:#fff"></div>
<div class="bg" style="left:5px;top:538.3px;width:1208.6px;height:22.5px;"></div>
<div class="tab" style="left:5px;top:536.3px;width:73px;height:26px;background:#fff;padding:4.5px 0 0 7.5px"><span style="display:inline-block;transform:scaleX(0.9684);transform-origin:0 0">Movimenti</span></div>
<div class="grid" style="left:10px;top:564px;width:1203.6px;height:157px">
<div class="hd" style="left:0px;top:0px;width:1133px;height:52px;"></div>
<div class="" style="left:0px;top:0px;width:17px;height:52px;background:linear-gradient(90deg,#f6f6f6,#eeeeee)"></div>
<div class="vs" style="left:17px;top:0px;width:1px;height:53px;"></div>
<div class="gr" style="left:19px;top:1px;width:81px;height:25px;"></div>
<div class="h r" style="left:18px;top:26px;width:83px;height:26px;"><span style="display:inline-block;transform:scaleX(0.8681);transform-origin:100% 0">Numero Mov.</span></div>
<div class="vs" style="left:101px;top:0px;width:1px;height:53px;"></div>
<div class="gr" style="left:103px;top:1px;width:117px;height:25px;"></div>
<div class="h" style="left:102px;top:26px;width:119px;height:26px;"><span style="display:inline-block;transform:scaleX(0.8796);transform-origin:0 0">Data Reg.</span></div>
<div class="vs" style="left:221px;top:0px;width:1px;height:53px;"></div>
<div class="gr" style="left:223px;top:1px;width:117px;height:25px;"></div>
<div class="h" style="left:222px;top:26px;width:119px;height:26px;"><span style="display:inline-block;transform:scaleX(0.8796);transform-origin:0 0">Data Valuta</span></div>
<div class="vs" style="left:341px;top:0px;width:1px;height:53px;"></div>
<div class="gr" style="left:343px;top:1px;width:236px;height:25px;"></div>
<div class="h" style="left:342px;top:26px;width:238px;height:26px;"><span style="display:inline-block;transform:scaleX(0.8719);transform-origin:0 0">Descrizione Conto</span></div>
<div class="vs" style="left:580px;top:0px;width:1px;height:53px;"></div>
<div class="gr" style="left:582px;top:1px;width:237px;height:25px;"></div>
<div class="h" style="left:581px;top:26px;width:239px;height:26px;"><span style="display:inline-block;transform:scaleX(0.8752);transform-origin:0 0">Descrizione Movimento</span></div>
<div class="vs" style="left:820px;top:0px;width:1px;height:53px;"></div>
<div class="gr" style="left:822px;top:1px;width:93px;height:25px;"></div>
<div class="h r" style="left:821px;top:26px;width:95px;height:26px;"><span style="display:inline-block;transform:scaleX(0.8685);transform-origin:100% 0">Importo Divisa</span></div>
<div class="vs" style="left:916px;top:0px;width:1px;height:53px;"></div>
<div class="gr" style="left:918px;top:1px;width:57px;height:25px;"></div>
<div class="h" style="left:917px;top:26px;width:59px;height:26px;"><span style="display:inline-block;transform:scaleX(0.8594);transform-origin:0 0">Divisa</span></div>
<div class="vs" style="left:976px;top:0px;width:1px;height:53px;"></div>
<div class="gr" style="left:978px;top:1px;width:93px;height:25px;"></div>
<div class="h r" style="left:977px;top:26px;width:95px;height:26px;"><span style="display:inline-block;transform:scaleX(0.8700);transform-origin:100% 0">Importo Base</span></div>
<div class="vs" style="left:1072px;top:0px;width:1px;height:53px;"></div>
<div class="gr" style="left:1074px;top:1px;width:57px;height:25px;"></div>
<div class="h" style="left:1073px;top:26px;width:59px;height:26px;"><span style="display:inline-block;transform:scaleX(0.9043);transform-origin:0 0">Segno</span></div>
<div class="vs" style="left:1132px;top:0px;width:1px;height:53px;"></div>
<div class="hs" style="left:0px;top:52px;width:1133px;height:1px;"></div>
<div class="sel" style="left:18px;top:53px;width:1115px;height:26px;"></div>
<div class="rh" style="left:0px;top:53px;width:18px;height:27px;"><svg width="8" height="12" style="position:absolute;left:2.3px;top:1px"><path d="M0 0L6 5.5L0 11Z" fill="#000"/></svg></div>
<div class="c r" style="left:18px;top:53px;width:83px;height:26px;"><span style="display:inline-block;transform:scaleX(0.9435);transform-origin:100% 0">13</span></div>
<div class="gls" style="left:101px;top:53px;width:1px;height:26px;"></div>
<div class="c" style="left:102px;top:53px;width:119px;height:26px;"><span style="display:inline-block;transform:scaleX(0.9524);transform-origin:0 0">15/06/2017</span></div>
<div class="gls" style="left:221px;top:53px;width:1px;height:26px;"></div>
<div class="c" style="left:222px;top:53px;width:119px;height:26px;"><span style="display:inline-block;transform:scaleX(0.9524);transform-origin:0 0">15/06/2017</span></div>
<div class="gls" style="left:341px;top:53px;width:1px;height:26px;"></div>
<div class="c" style="left:342px;top:53px;width:238px;height:26px;padding-left:2.8px"><span style="display:inline-block;transform:scaleX(0.9149);transform-origin:0 0">Banco Trevenezie c/c 131</span></div>
<div class="gls" style="left:580px;top:53px;width:1px;height:26px;"></div>
<div class="c" style="left:581px;top:53px;width:239px;height:26px;padding-left:2.8px"><span style="display:inline-block;transform:scaleX(0.8848);transform-origin:0 0">Acc.Finanz.Cod.DAVINES</span></div>
<div class="gls" style="left:820px;top:53px;width:1px;height:26px;"></div>
<div class="c r" style="left:821px;top:53px;width:95px;height:26px;"><span style="display:inline-block;transform:scaleX(0.8763);transform-origin:100% 0">2.342,40</span></div>
<div class="gls" style="left:916px;top:53px;width:1px;height:26px;"></div>
<div class="c" style="left:917px;top:53px;width:59px;height:26px;padding-left:2.8px"><span style="display:inline-block;transform:scaleX(0.8827);transform-origin:0 0">EUR</span></div>
<div class="gls" style="left:976px;top:53px;width:1px;height:26px;"></div>
<div class="c r" style="left:977px;top:53px;width:95px;height:26px;"><span style="display:inline-block;transform:scaleX(0.8763);transform-origin:100% 0">2.342,40</span></div>
<div class="gls" style="left:1072px;top:53px;width:1px;height:26px;"></div>
<div class="c" style="left:1073px;top:53px;width:59px;height:26px;padding-left:2.8px">D</div>
<div class="gls" style="left:1132px;top:53px;width:1px;height:26px;"></div>
<div class="gl" style="left:18px;top:79px;width:1115px;height:1px;"></div>
<div class="rh" style="left:0px;top:80px;width:18px;height:27px;"></div>
<div class="c r" style="left:18px;top:80px;width:83px;height:26px;"><span style="display:inline-block;transform:scaleX(0.9435);transform-origin:100% 0">13</span></div>
<div class="gl" style="left:101px;top:80px;width:1px;height:26px;"></div>
<div class="c" style="left:102px;top:80px;width:119px;height:26px;"><span style="display:inline-block;transform:scaleX(0.9524);transform-origin:0 0">15/06/2017</span></div>
<div class="gl" style="left:221px;top:80px;width:1px;height:26px;"></div>
<div class="c" style="left:222px;top:80px;width:119px;height:26px;"><span style="display:inline-block;transform:scaleX(0.9524);transform-origin:0 0">15/06/2017</span></div>
<div class="gl" style="left:341px;top:80px;width:1px;height:26px;"></div>
<div class="c" style="left:342px;top:80px;width:238px;height:26px;padding-left:2.8px"><span style="display:inline-block;transform:scaleX(0.8959);transform-origin:0 0">Banco Trevenezie c/ant.fatture Italia nr</span></div>
<div class="gl" style="left:580px;top:80px;width:1px;height:26px;"></div>
<div class="c" style="left:581px;top:80px;width:239px;height:26px;padding-left:2.8px"><span style="display:inline-block;transform:scaleX(0.8848);transform-origin:0 0">Acc.Finanz.Cod.DAVINES</span></div>
<div class="gl" style="left:820px;top:80px;width:1px;height:26px;"></div>
<div class="c r" style="left:821px;top:80px;width:95px;height:26px;"><span style="display:inline-block;transform:scaleX(0.8763);transform-origin:100% 0">2.342,40</span></div>
<div class="gl" style="left:916px;top:80px;width:1px;height:26px;"></div>
<div class="c" style="left:917px;top:80px;width:59px;height:26px;padding-left:2.8px"><span style="display:inline-block;transform:scaleX(0.8827);transform-origin:0 0">EUR</span></div>
<div class="gl" style="left:976px;top:80px;width:1px;height:26px;"></div>
<div class="c r" style="left:977px;top:80px;width:95px;height:26px;"><span style="display:inline-block;transform:scaleX(0.8763);transform-origin:100% 0">2.342,40</span></div>
<div class="gl" style="left:1072px;top:80px;width:1px;height:26px;"></div>
<div class="c" style="left:1073px;top:80px;width:59px;height:26px;padding-left:2.8px">A</div>
<div class="gl" style="left:1132px;top:80px;width:1px;height:26px;"></div>
<div class="gl" style="left:18px;top:106px;width:1115px;height:1px;"></div>
</div>
<div class="" style="left:0px;top:696px;width:1216px;height:10px;background:#fff"></div>
<div class="" style="left:1213.6px;top:0px;width:10px;height:700px;background:#fff"></div>
</div></body></html>
